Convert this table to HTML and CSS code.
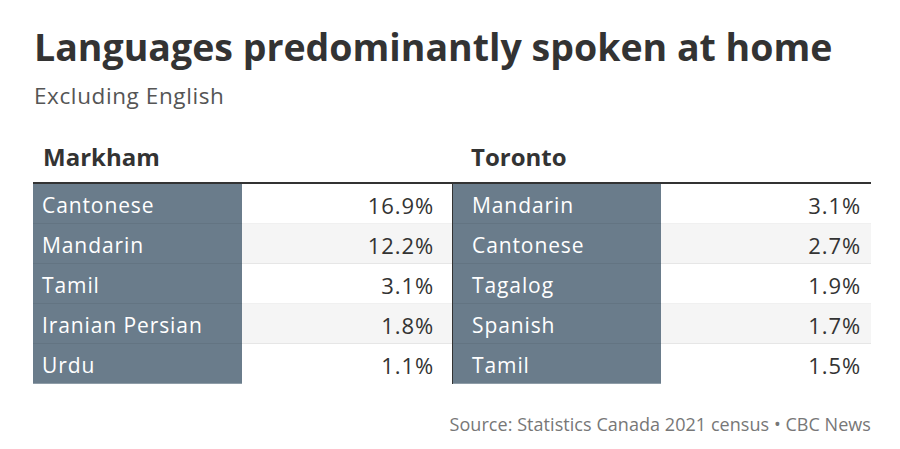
FILE: index.html
```html
<!DOCTYPE html>
<html lang="en">
<head>
<meta charset="utf-8">
<title>Languages predominantly spoken at home</title>
<link rel="stylesheet" href="styles.css">
</head>
<body>
<div class="chart">
  <h1 class="title">Languages predominantly spoken at home</h1>
  <p class="subtitle">Excluding English</p>
  <div class="tables">
    <div class="city city-left">
      <h2 class="city-name">Markham</h2>
      <div class="table">
        <div class="row"><span class="lang">Cantonese</span><span class="pct">16.9%</span></div>
        <div class="row alt"><span class="lang">Mandarin</span><span class="pct">12.2%</span></div>
        <div class="row"><span class="lang">Tamil</span><span class="pct">3.1%</span></div>
        <div class="row alt"><span class="lang">Iranian Persian</span><span class="pct">1.8%</span></div>
        <div class="row last"><span class="lang">Urdu</span><span class="pct">1.1%</span></div>
      </div>
    </div>
    <div class="city city-right">
      <h2 class="city-name">Toronto</h2>
      <div class="table">
        <div class="row"><span class="lang">Mandarin</span><span class="pct">3.1%</span></div>
        <div class="row alt"><span class="lang">Cantonese</span><span class="pct">2.7%</span></div>
        <div class="row"><span class="lang">Tagalog</span><span class="pct">1.9%</span></div>
        <div class="row alt"><span class="lang">Spanish</span><span class="pct">1.7%</span></div>
        <div class="row last"><span class="lang">Tamil</span><span class="pct">1.5%</span></div>
      </div>
    </div>
  </div>
  <p class="source">Source: Statistics Canada 2021 census • CBC News</p>
</div>
</body>
</html>
```

FILE: styles.css
```css
html, body {
  margin: 0;
  padding: 0;
  background: #ffffff;
}

body {
  font-family: "Open Sans", "Noto Sans", sans-serif;
  color: #333333;
}

.chart {
  width: 900px;
  height: 449px;
  box-sizing: border-box;
  padding: 25px 29px 0 33px;
}

.title {
  margin: 0;
  font-size: 37.5px;
  line-height: 44px;
  font-weight: 700;
  color: #333333;
  padding-left: 1px;
}

.subtitle {
  margin: 12px 0 0 0;
  font-size: 22.5px;
  line-height: 30px;
  letter-spacing: 0.6px;
  color: #555555;
  padding-left: 1px;
}

.tables {
  margin-top: 30px;
  display: grid;
  grid-template-columns: 419px 419px;
}

.city-name {
  margin: 0 0 9px 0;
  font-size: 24px;
  line-height: 32px;
  font-weight: 700;
  color: #333333;
}

.city-left .city-name {
  padding-left: 10px;
}

.city-right .city-name {
  padding-left: 19px;
}

.table {
  border-top: 2px solid #333333;
}

.city-right .table {
  border-left: 1px solid #333333;
}

.row {
  display: flex;
  height: 40px;
  font-size: 21px;
  line-height: 43px;
  letter-spacing: 0.9px;
  background: #ffffff;
}

.row.alt {
  background: #f5f5f5;
}

.lang,
.pct {
  box-sizing: border-box;
  height: 40px;
  border-bottom: 1px solid rgba(0, 0, 0, 0.06);
}

.row.last .lang,
.row.last .pct {
  border-bottom-color: transparent;
}

.lang {
  flex: 0 0 209px;
  background: #6a7c8b;
  color: #ffffff;
}

.row.last .lang {
  border-bottom-color: rgba(255, 255, 255, 0.25);
}

.city-left .lang {
  padding-left: 9px;
}

.city-right .lang {
  flex-basis: 208px;
  padding-left: 19px;
}

.pct {
  flex: 1;
  text-align: right;
  color: #333333;
  font-size: 22px;
  letter-spacing: 0.9px;
}

.city-left .pct {
  padding-right: 18px;
}

.city-right .pct {
  padding-right: 10px;
}

.source {
  margin: 28px 0 0 0;
  font-size: 18px;
  line-height: 24px;
  letter-spacing: 0.05px;
  color: #777777;
  text-align: right;
}
```
